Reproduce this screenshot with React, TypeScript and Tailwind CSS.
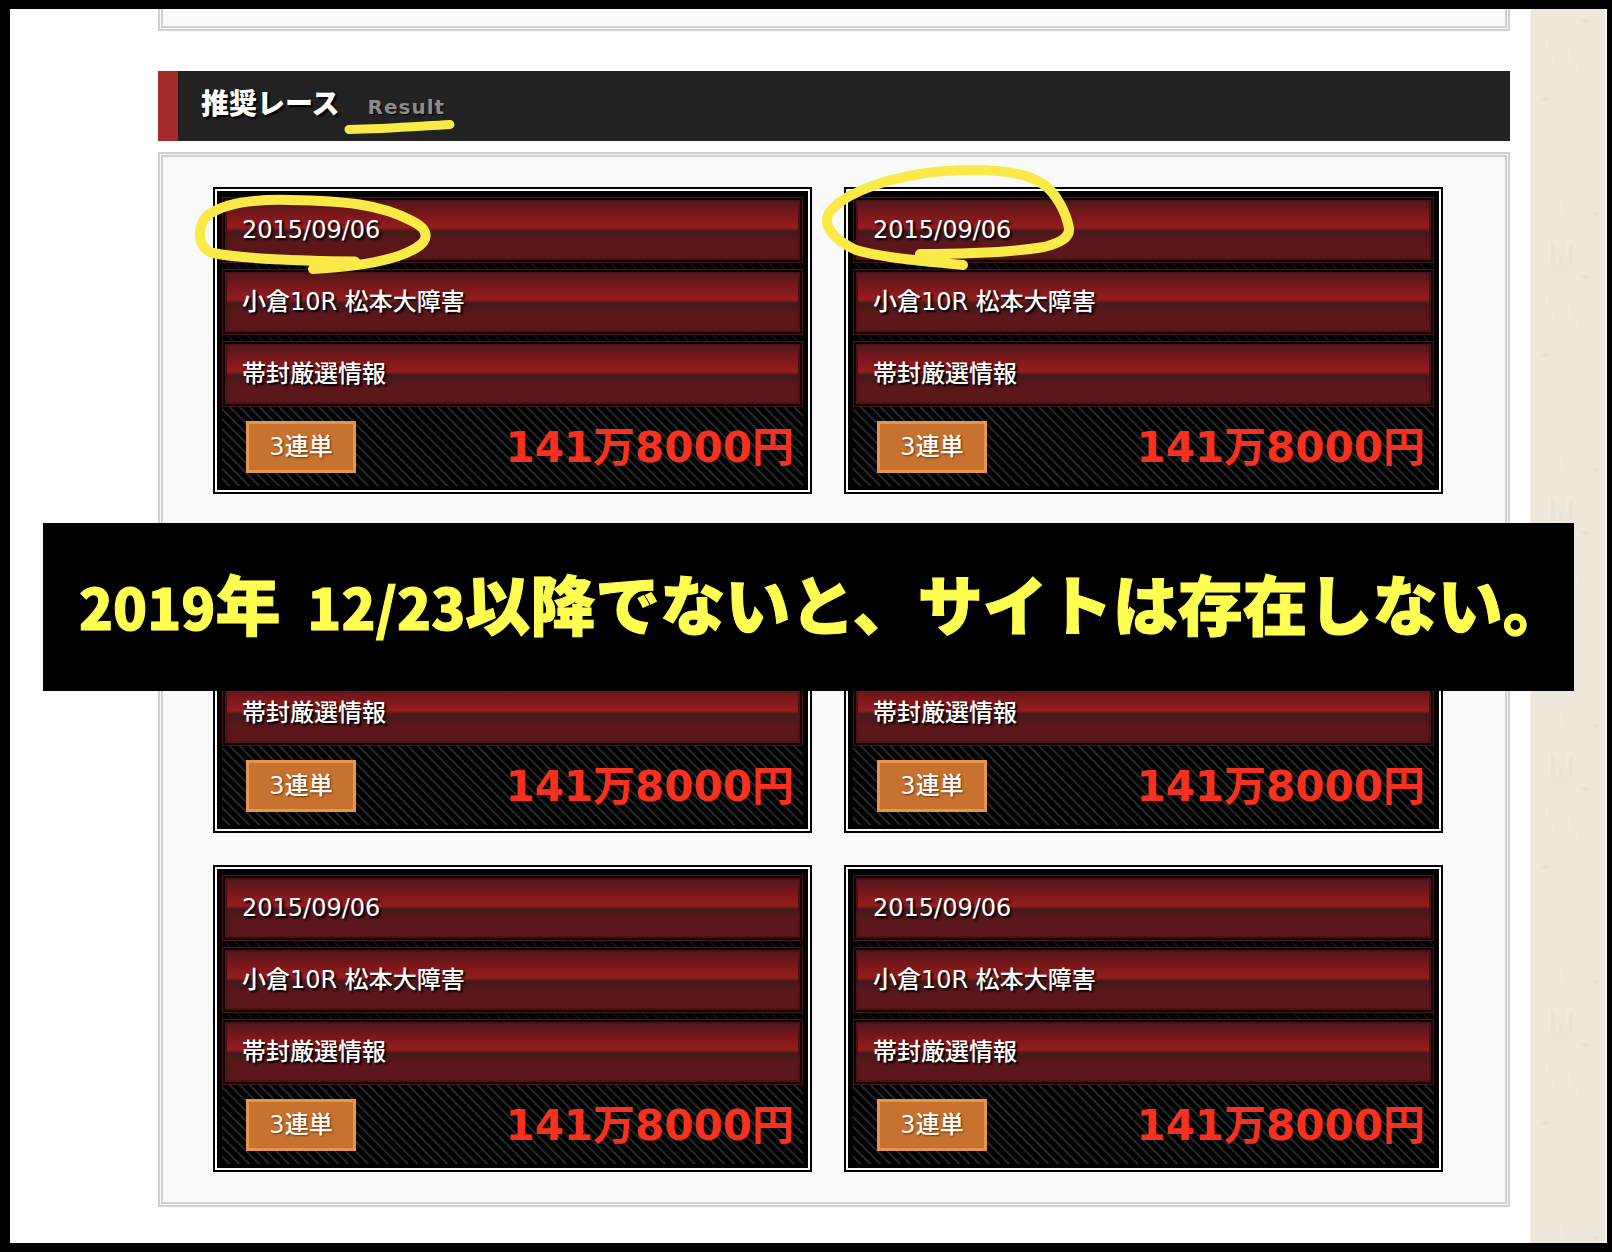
type Race = { date: string; race: string; plan: string; bet: string; payout: string };

const race: Race = {
  date: '2015/09/06',
  race: '小倉10R 松本大障害',
  plan: '帯封厳選情報',
  bet: '3連単',
  payout: '141万8000円',
};

const races: Race[] = Array.from({ length: 6 }, () => race);

function RaceRow({ text }: { text: string }) {
  return (
    <li className="border border-[#4a1416] bg-[#120405] p-[2px]">
      <p className="flex h-[60px] items-center border-2 border-[#4d1114] bg-[linear-gradient(180deg,#54181a_0%,#7a171b_22%,#951d1b_46%,#431a1a_52%,#5a1619_72%,#5a1719_100%)] px-[15px] text-2xl font-medium text-white [text-shadow:2px_2px_2px_#000]">
        {text}
      </p>
    </li>
  );
}

function RaceCard({ item }: { item: Race }) {
  return (
    <article className="border-[6px] border-double border-black bg-black bg-clip-padding px-[3px] pt-1 pb-[2px]">
      <div className="bg-[repeating-linear-gradient(45deg,#000_0px,#000_4px,#2b3032_5px,#1c2022_6px,#000_7px)]">
        <ul className="flex flex-col gap-[6px] bg-black/60">
          <RaceRow text={item.date} />
          <RaceRow text={item.race} />
          <RaceRow text={item.plan} />
        </ul>
        <div className="flex h-[79px] items-start justify-between pt-[14px] pr-[9px] pl-6">
          <span className="flex h-[52px] w-[110px] items-center justify-center border-[3px] border-[#e6954c] bg-[#c7722f] text-2xl font-medium text-white [text-shadow:1px_1px_2px_#6b3208]">
            {item.bet}
          </span>
          <strong className="text-[42px] leading-[54px] font-bold text-[#f7301f]">{item.payout}</strong>
        </div>
      </div>
    </article>
  );
}

// Yellow marker strokes drawn over the page
function Marker() {
  return (
    <svg
      className="pointer-events-none absolute top-0 left-0"
      width="1100"
      height="290"
      viewBox="0 0 1100 290"
      fill="none"
      stroke="#f9ea47"
      strokeWidth="9"
      strokeLinecap="round"
      strokeLinejoin="round"
      aria-hidden="true"
    >
      <path d="M349 129.500C384 129 415 126.500 450 124.500" />
      <path strokeWidth="10" d="M355 261.500C308 261 248 260 213 253C196 249 197 224 208 215C226 202 256 199 290 200C345 201 380 204 412 221C430 230 429 240 416 248C395 261 352 267 313 269" />
      <path strokeWidth="10" d="M963 265C925 261 882 258 856 250C834 240 822 226 829 213C842 194 890 175 945 171C990 168 1024 171 1043 184C1056 193 1066 212 1069 228C1070 238 1060 243 1044 247C1006 253 960 254 920 254" />
    </svg>
  );
}

function PaperTexture() {
  return (
    <svg className="h-full w-full opacity-60" aria-hidden="true">
      <defs>
        <pattern id="paper" width="72" height="256" patternUnits="userSpaceOnUse">
          <path d="M16 30v10M38 38v14M22 46v12M46 56v10M30 190v14M18 232v20M36 228v18" stroke="#f4eee3" strokeWidth="3" />
          <path d="M22 234v24M30 246v16M40 236v18M10 90h8M50 12h8M62 205h6" stroke="#e8e0d2" strokeWidth="4" />
        </pattern>
      </defs>
      <rect width="100%" height="100%" fill="url(#paper)" />
    </svg>
  );
}

export default function App() {
  return (
    <div className="relative flex min-h-screen w-full bg-black pt-[9px] pr-[5px] pb-[9px] pl-[10px] font-['DejaVu_Sans','Noto_Sans_CJK_JP',sans-serif]">
      <main className="flex-1 bg-[#fefefe] pr-5 pl-[148px]">
        <div className="h-[22px] border-[5px] border-t-0 border-double border-[#d0d0d0] bg-[#fafafa]" />

        <header className="mt-10 flex h-[70px] items-center gap-7 border-l-[20px] border-[#a52a2a] bg-[#222] pb-[2px] pl-[23px]">
          <h2 className="text-[28px] font-black text-white [text-shadow:2px_2px_2px_#000]">推奨レース</h2>
          <span className="pt-1 text-xl font-bold tracking-wider text-[#8c8c8c] [text-shadow:1px_1px_1px_#000]">Result</span>
        </header>

        <section className="mt-[11px] grid grid-cols-2 gap-8 border-[5px] border-double border-[#d0d0d0] bg-[#fafafa] py-[30px] pr-[62px] pl-[50px]">
          {races.map((item, i) => (
            <RaceCard key={i} item={item} />
          ))}
        </section>
      </main>

      <aside className="w-[77px] border-r-2 border-l border-r-[#f8f8ec] border-l-[#f3f4e4] bg-[#eee8db]">
        <PaperTexture />
      </aside>

      <Marker />

      <div className="absolute top-[523px] right-[38px] left-[43px] flex h-[168px] items-center bg-black pb-[10px] pl-9">
        <p className="text-[65px] leading-none font-black whitespace-nowrap text-[#ffff52] font-['Noto_Sans_CJK_JP',sans-serif] [-webkit-text-stroke:1px_#ffff52]">
          <span className="text-[56px]">2019</span>年 <span className="ml-3 text-[56px]">12/23</span>以降でないと、サイトは存在しない。
        </p>
      </div>
    </div>
  );
}
